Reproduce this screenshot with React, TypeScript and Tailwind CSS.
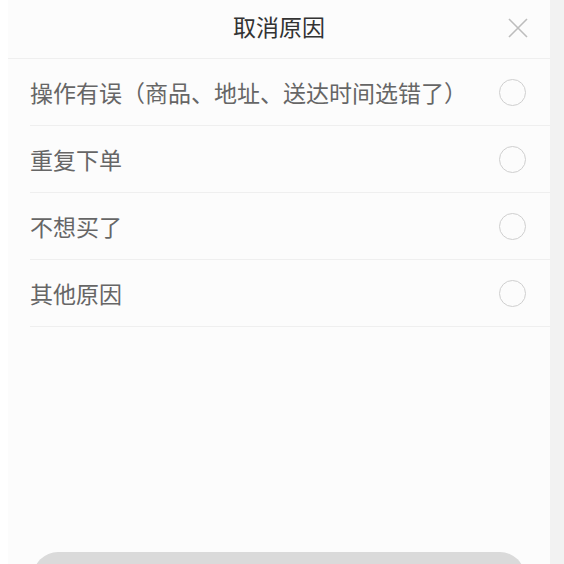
const reasons = [
  '操作有误（商品、地址、送达时间选错了）',
  '重复下单',
  '不想买了',
  '其他原因',
]

const font = { fontFamily: '"Noto Sans CJK SC", "Noto Sans", sans-serif' }

export default function App() {
  return (
    <div className="flex h-[564px] w-[564px] overflow-hidden bg-white" style={font}>
      <div className="w-[8px] shrink-0 bg-white" />
      <div className="flex w-[542px] shrink-0 flex-col bg-[#fcfcfc]">
        {/* header */}
        <div className="relative flex h-[59px] shrink-0 items-center justify-center border-b border-[#efefef] pb-[6px]">
          <span className="text-[23px] leading-none text-[#333]">取消原因</span>
          <svg
            className="absolute right-[22px] top-[18px]"
            width="20"
            height="20"
            viewBox="0 0 20 20"
            fill="none"
            stroke="#bdbdbd"
            strokeWidth="1.6"
          >
            <path d="M1 1 L19 19 M19 1 L1 19" />
          </svg>
        </div>

        {/* reasons */}
        <div className="pl-[22px]">
          {reasons.map((r) => (
            <div
              key={r}
              className="flex h-[67px] items-center justify-between border-b border-[#efefef] pr-[24px]"
            >
              <span className="text-[23px] leading-none text-[#666]">{r}</span>
              <span className="h-[27px] w-[27px] rounded-full border border-[#cfcfcf]" />
            </div>
          ))}
        </div>

        <div className="flex-1" />

        {/* confirm button, cut off at the bottom */}
        <div className="px-[25px]">
          <div className="h-[50px] translate-y-[38px] rounded-[25px] bg-[#dadada]" />
        </div>
      </div>
      <div className="flex-1 bg-[#f2f2f2]" />
    </div>
  )
}
